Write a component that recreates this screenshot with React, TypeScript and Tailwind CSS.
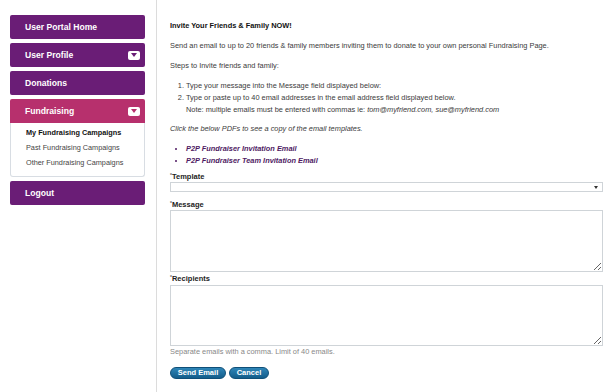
import type { ReactNode } from 'react';

function Caret({ tone }: { tone: string }) {
  return (
    <span className="flex h-[9px] w-[12px] items-center justify-center rounded-[2px] bg-white">
      <svg width="6" height="4" viewBox="0 0 6 4">
        <path d="M0 0 L6 0 L3 4 Z" fill={tone} />
      </svg>
    </span>
  );
}

function NavButton({ label, caret, active }: { label: string; caret?: boolean; active?: boolean }) {
  return (
    <div
      className={`flex h-[24px] items-center justify-between rounded-[2px] pl-[15px] pr-[5px] text-[8.6px] font-bold text-white ${
        active ? 'rounded-b-none bg-[#b7306d]' : 'bg-[#6a1d76]'
      }`}
    >
      <span>{label}</span>
      {caret && <Caret tone={active ? '#b7306d' : '#6a1d76'} />}
    </div>
  );
}

function Label({ children }: { children: ReactNode }) {
  return (
    <div className="h-[10px] text-[7.5px] font-bold leading-[10px] text-[#222]">
      <span className="relative -top-[2px] text-[5px] text-[#666]">*</span>
      {children}
    </div>
  );
}

export default function App() {
  return (
    <div className="flex h-[392px] w-[616px] bg-white font-['Liberation_Sans',Arial,sans-serif]">
      {/* Sidebar */}
      <aside className="w-[157px] shrink-0 border-r border-[#dcdcdc] pl-[10px] pr-[11px] pt-[15px]">
        <div className="flex flex-col gap-[4px]">
          <NavButton label="User Portal Home" />
          <NavButton label="User Profile" caret />
          <NavButton label="Donations" />
          <div>
            <NavButton label="Fundraising" caret active />
            <ul className="rounded-b-[3px] border border-t-0 border-[#d8dde3] pb-[6px] pl-[15px] pt-[2px] text-[7.3px] leading-[15px] text-[#444]">
              <li className="font-bold text-[#111]">My Fundraising Campaigns</li>
              <li>Past Fundraising Campaigns</li>
              <li>Other Fundraising Campaigns</li>
            </ul>
          </div>
          <NavButton label="Logout" />
        </div>
      </aside>

      {/* Main */}
      <main className="w-[446px] pl-[13px] pt-[20px] text-[7.4px] leading-[12px] text-[#3a3a3a]">
        <h1 className="font-bold text-[#111]">Invite Your Friends &amp; Family NOW!</h1>
        <p className="mt-[8px]">
          Send an email to up to 20 friends &amp; family members inviting them to donate to your own personal Fundraising Page.
        </p>
        <p className="mt-[8px]">Steps to Invite friends and family:</p>
        <ol className="mt-[8px] list-decimal pl-[16px]">
          <li>Type your message into the Message field displayed below:</li>
          <li>
            Type or paste up to 40 email addresses in the email address field displayed below.
            <br />
            Note: multiple emails must be entered with commas ie: <i>tom@myfriend.com, sue@myfriend.com</i>
          </li>
        </ol>
        <p className="mt-[7px] italic">Click the below PDFs to see a copy of the email templates.</p>
        <ul className="mt-[8px] list-disc pl-[16px] font-bold italic text-[#4f1a63]">
          <li>P2P Fundraiser Invitation Email</li>
          <li>P2P Fundraiser Team Invitation Email</li>
        </ul>

        <div className="mt-[5px]">
          <Label>Template</Label>
          <div className="flex h-[10px] items-center justify-end border border-[#cfd4d8] pr-[4px]">
            <svg width="4" height="3" viewBox="0 0 4 3">
              <path d="M0 0 L4 0 L2 3 Z" fill="#333" />
            </svg>
          </div>
        </div>

        <div className="mt-[8px]">
          <Label>Message</Label>
          <textarea className="block h-[62px] w-full border border-[#cfd4d8] outline-none" />
        </div>

        <div className="mt-[2px]">
          <Label>Recipients</Label>
          <textarea className="mt-[1px] block h-[61px] w-full border border-[#cfd4d8] outline-none" />
        </div>

        <p className="mt-[1px] leading-[10px] text-[#888]">Separate emails with a comma. Limit of 40 emails.</p>

        <div className="mt-[10px] flex gap-[3px]">
          <button className="h-[12px] w-[56px] rounded-full border border-[#0f4f78] bg-gradient-to-b from-[#2f86b8] to-[#135d8b] text-[7.5px] font-bold leading-[10px] text-white">
            Send Email
          </button>
          <button className="h-[12px] w-[40px] rounded-full border border-[#0f4f78] bg-gradient-to-b from-[#2f86b8] to-[#135d8b] text-[7.5px] font-bold leading-[10px] text-white">
            Cancel
          </button>
        </div>
      </main>
    </div>
  );
}
